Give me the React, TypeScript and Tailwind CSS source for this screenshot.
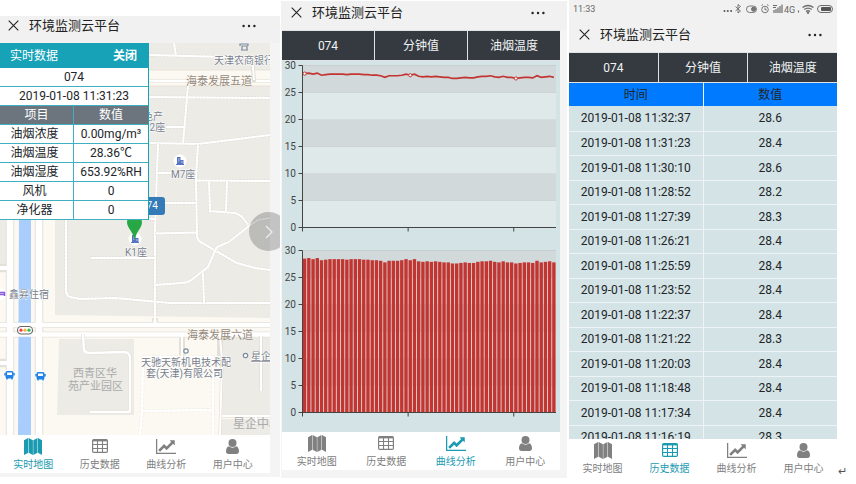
import type { ReactNode } from "react";

const FONT = "font-['Roboto','Noto_Sans_CJK_SC',sans-serif]";

function CloseIcon() {
  return (
    <svg viewBox="0 0 11 11" className="size-[11px]" fill="none" stroke="#222" strokeWidth="1.1">
      <path d="M.7.7l9.6 9.6M10.3.7L.7 10.3" />
    </svg>
  );
}

function DotsIcon() {
  return (
    <svg viewBox="0 0 14 4" className="h-1 w-3.5" fill="#222">
      <circle cx="1.6" cy="2" r="1.2" />
      <circle cx="7" cy="2" r="1.2" />
      <circle cx="12.4" cy="2" r="1.2" />
    </svg>
  );
}

function TitleBar({ className }: { className: string }) {
  return (
    <header className={`flex items-center bg-[#f1f1f1] ${className}`}>
      <button type="button" aria-label="close" className="mr-2.5">
        <CloseIcon />
      </button>
      <h1 className="text-[13px] leading-4 text-[#222]">环境监测云平台</h1>
      <button type="button" aria-label="more" className="ml-auto">
        <DotsIcon />
      </button>
    </header>
  );
}

function MapIcon() {
  return (
    <svg viewBox="0 0 18 17" className="h-[17px] w-[18px]" fill="currentColor">
      <path d="M0 2.200L4.200 0v14.800L0 17zM4.700 0L8.900 2.200V17l-4.200-2.200zM9.300 2.200L13.500 0v14.800L9.300 17zM14 0l4 2.200V17l-4-2.200z" />
    </svg>
  );
}

function TableIcon() {
  return (
    <svg viewBox="0 0 16 14" className="h-3.5 w-4" fill="none" stroke="currentColor">
      <rect x=".6" y=".6" width="14.800" height="12.800" rx="1.200" strokeWidth="1.200" />
      <path d="M1 1.500h14" strokeWidth="1.800" />
      <path d="M1 5.500h14M1 9.500h14M5.500 1v12M10.500 1v12" strokeWidth="1.100" />
    </svg>
  );
}

function LineIcon() {
  return (
    <svg viewBox="0 0 2048 1536" className="h-[15px] w-5" fill="currentColor">
      <path d="M2048 1408v128H0V0h128v1408zM1920 160v435q0 21-19.500 29.500t-35.500-7.500l-121-121-633 633q-10 10-23 10t-23-10l-233-233-416 416-192-192 585-585q10-10 23-10t23 10l233 233 464-464-121-121q-16-16-7.500-35.500t29.500-19.500h435q14 0 23 9t9 23z" />
    </svg>
  );
}

function UserIcon() {
  return (
    <svg viewBox="0 0 13 15" className="h-[15px] w-[13px]" fill="currentColor">
      <circle cx="6.500" cy="4" r="4" />
      <path d="M3 7.300C1 7.600 0 9.800 0 12.300 0 14 1 15 2.600 15h7.800c1.600 0 2.600-1 2.600-2.700 0-2.500-1-4.700-3-5-1 .9-2.100 1.400-3.500 1.400S4 8.200 3 7.300z" />
    </svg>
  );
}

const NAV: { label: string; icon: ReactNode }[] = [
  { label: "实时地图", icon: <MapIcon /> },
  { label: "历史数据", icon: <TableIcon /> },
  { label: "曲线分析", icon: <LineIcon /> },
  { label: "用户中心", icon: <UserIcon /> },
];

function TabBar({ active }: { active: number }) {
  return (
    <nav className="grid h-[38px] shrink-0 grid-cols-4 bg-white pt-[3px]">
      {NAV.map((item, i) => (
        <a
          key={item.label}
          href="#"
          className={`flex flex-col items-center gap-1 ${i === active ? "text-[#1b9bb1]" : "text-[#808080]"}`}
        >
          <span className="flex h-4 items-center">{item.icon}</span>
          <span className="text-[10px] leading-3.5 whitespace-nowrap">{item.label}</span>
        </a>
      ))}
    </nav>
  );
}

function FilterTabs() {
  return (
    <div className="grid h-[31px] shrink-0 grid-cols-3 gap-px border-y border-[#dfe3e5] bg-[#dfe3e5] text-[12px] text-[#f1f3f4]">
      {["074", "分钟值", "油烟温度"].map((t) => (
        <button key={t} type="button" className="bg-[#343a40]">
          {t}
        </button>
      ))}
    </div>
  );
}

const ROADS = [
  "M149 55L270 58M174 43l2 13M252 56l2 24",
  "M149 97l121 1M188 86l-5 58M166 127h18",
  "M149 143l49 1 72-9",
  "M158 143l-3 87v90",
  "M198 144l-2 34 1 59q1 4 5 6l35 20 18 5 15 2",
  "M197 180.500l73 .5M209 181l1 30 25 2q6 2 8 5l6 8-20 16-12 5-3 6-6 14-18 14q-4 2-8 2l-27 2",
  "M227 181l-1 30M249 226l9-6 12-2",
  "M155 203h41M155 233.500l42-1M157 173h18M149 219h6",
  "M66 220v70q0 6 4 7l10 2 35-1 55 5h100",
  "M203 273l1 30M91 258h64",
];

function Building({ x, y }: { x: number; y: number }) {
  return (
    <g>
      <circle cx={x} cy={y} r="6.500" fill="#fff" />
      <path d={`M${x - 3} ${y + 3}v-7h3.500v3h3v4z`} fill="#5874c4" />
      <path d={`M${x - 2} ${y - 2}h1.500M${x - 2} ${y}h1.500M${x + 1} ${y + 1}h2`} stroke="#fff" strokeWidth=".6" />
      <path d={`M${x - 4} ${y + 3.5}h8`} stroke="#5874c4" />
    </g>
  );
}

function Bus({ x, y }: { x: number; y: number }) {
  return (
    <g>
      <circle cx={x} cy={y} r="6" fill="#fff" />
      <rect x={x - 4} y={y - 4} width="8" height="7.500" rx="1.500" fill="#1e82e6" />
      <rect x={x - 2.5} y={y - 2.5} width="5" height="2.500" fill="#fff" />
      <path
        d={`M${x - 4.5} ${y - 2}v2.500M${x + 4.5} ${y - 2}v2.500M${x - 2.5} ${y + 2}v2.500M${x + 2.5} ${y + 2}v2.500`}
        stroke="#1e82e6"
        strokeWidth="1.500"
      />
    </g>
  );
}

function MapCanvas() {
  return (
    <svg viewBox="0 43 270 392" preserveAspectRatio="xMinYMid slice" className="block h-[392px] w-full">
      <rect y="43" width="270" height="392" fill="#fcf9f2" />
      <g fill="#ecebe6">
        <path d="M50 43h220v27H50zM55 86h215v232L55 315z" />
        <path d="M0 220h6v46H0zM59 339h75v76H57zM222 337h48v77h-48z" />
        <path d="M222 419h48v16h-50z" />
      </g>
      <path d="M50 70h220M50 86h220" stroke="#e7e2d8" />
      <path d="M50 81h220" stroke="#e3ded2" strokeWidth="3" />
      <path d="M50 81h220" stroke="#fff" strokeWidth="2" />
      <path d="M252 56l2 26" stroke="#e0ddd4" strokeWidth="4" />

      <g stroke="#e4e1d9" strokeWidth="8.500" fill="none">
        <path d="M10 215v220M39 215v220M0 268h8M0 363h8" />
        <path d="M0 325h270M0 334.500h270M155 318v8M182 336v20M220 336v20" strokeWidth="6" />
      </g>
      <path d="M19 215h12v220H18z" fill="#a9cdfd" />
      <g stroke="#fff" strokeWidth="6.500" fill="none">
        <path d="M10 215v220M39 215v220" />
        <path d="M0 268h8M0 363h8" strokeWidth="4" />
        <path d="M0 325h270M0 334.500h270" strokeWidth="4.500" />
        <path d="M155 318v8" strokeWidth="3" />
        <path d="M182 336v20" strokeWidth="2" />
      </g>
      <path d="M220 336l2 24-2 75M222 416h48M261 336v55M256 416v8" stroke="#d9d7d0" strokeWidth="3" fill="none" />
      <path d="M220 336l2 24-2 75M222 416h48M261 336v55M256 416v8" stroke="#fff" strokeWidth="2" fill="none" />

      <g fill="none">
        {ROADS.map((d) => (
          <g key={d}>
            <path d={d} stroke="#dad8d1" strokeWidth="3" strokeDasharray="2 1.500" />
            <path d={d} stroke="#fff" strokeWidth="2" />
          </g>
        ))}
        <path d="M83 334l1 16q1 3 5 3l36-1q5 1 5 6v53q0 1-2 1H90" stroke="#dedcd5" strokeWidth="3.500" />
        <path d="M83 334l1 16q1 3 5 3l36-1q5 1 5 6v53q0 1-2 1H90" stroke="#fff" strokeWidth="2.500" />
        <path d="M143 357h70v78M143 357l-1 54-2 24M143 411l70-1" stroke="#ebe8e1" strokeWidth="3.500" strokeDasharray="3 1.500" />
        <path d="M143 357h70v78M143 357l-1 54-2 24M143 411l70-1" stroke="#fff" strokeWidth="2.500" />
      </g>

      <g fill="none" stroke="#7d8ba0" strokeWidth="1.200">
        <path d="M240 46v-2h8v2M242 46v4h5v-4zM241 50h7" />
        <circle cx="186" cy="351" r="2.200" fill="#fff" />
        <circle cx="245.500" cy="355.500" r="2.200" fill="#fff" />
      </g>
      <Building x={180} y={161} />
      <Building x={135} y={239} />
      <Bus x={9.5} y={375} />
      <Bus x={40.5} y={376} />
      <rect x="17.500" y="326.500" width="15" height="7.500" rx="3.700" fill="#fff" stroke="#666" strokeWidth="1.100" />
      <circle cx="21" cy="330.200" r="1.600" fill="#f0425a" />
      <circle cx="25" cy="330.200" r="1.600" fill="#f5b52e" />
      <circle cx="29" cy="330.200" r="1.600" fill="#35b860" />
      <circle cx="0" cy="294" r="6" fill="#fff" />
      <path d="M0 292.500h4.500v3.500M0 294.500h4.500" stroke="#8a5bd6" strokeWidth="1.500" fill="none" />

      <g fontSize="10" fill="#78808c" stroke="#fff" strokeWidth="1" paintOrder="stroke">
        <text x="214" y="64">天津农商银行</text>
        <text x="171" y="178">M7座</text>
        <text x="125" y="256">K1座</text>
        <text x="9" y="298">鑫昇住宿</text>
        <text x="141" y="366">天驰天新机电技术配</text>
        <text x="146" y="377">套(天津)有限公司</text>
        <text x="251" y="360" textDecoration="underline">星企</text>
        <text x="143" y="120">色产</text>
        <text x="144" y="131">12座</text>
      </g>
      <g fontSize="11" fill="#968a7d">
        <text x="186" y="85">海泰发展五道</text>
        <text x="187" y="339">海泰发展六道</text>
      </g>
      <g fontSize="11" fill="#aaa">
        <text x="73" y="377">西青区华</text>
        <text x="68" y="390">苑产业园区</text>
        <text x="233" y="428" fontSize="12">星企中心</text>
      </g>

      <rect x="122" y="197" width="43" height="18" rx="3" fill="#337ab7" />
      <text x="141" y="209" fontSize="10" fill="#fff">074</text>
      <path d="M127 222a7.500 7.500 0 0 1 15 0c0 6-5.500 9-7 17h-1c-1-8-7-11-7-17z" fill="#28a745" />
    </svg>
  );
}

const READINGS = [
  ["油烟浓度", "0.00mg/m³"],
  ["油烟温度", "28.36℃"],
  ["油烟湿度", "653.92%RH"],
  ["风机", "0"],
  ["净化器", "0"],
];

function LivePanel() {
  return (
    <section className="absolute top-0 left-0 w-[149px] bg-white text-[12px] leading-[18px] text-[#212529]">
      <div className="flex h-[25px] items-center justify-between bg-[#17a2b8] pr-3 pl-2.5 text-white">
        <h2>实时数据</h2>
        <button type="button" className="font-bold">
          关闭
        </button>
      </div>
      <table className="w-full table-fixed border-separate border-spacing-0 border-r border-[#17a2b8] text-center [&_td]:border-b [&_td]:border-[#3fafc1] [&_td]:p-0 [&_th]:border-b [&_th]:border-[#3fafc1] [&_th]:p-0">
        <colgroup>
          <col className="w-[74px]" />
          <col />
        </colgroup>
        <tbody>
          <tr>
            <td colSpan={2}>074</td>
          </tr>
          <tr>
            <td colSpan={2}>2019-01-08 11:31:23</td>
          </tr>
          <tr className="bg-[#6c757d] text-white">
            <th className="border-r font-normal">项目</th>
            <th className="font-normal">数值</th>
          </tr>
          {READINGS.map(([k, v]) => (
            <tr key={k}>
              <td className="border-r pr-1!">{k}</td>
              <td>{v}</td>
            </tr>
          ))}
        </tbody>
      </table>
    </section>
  );
}

function MapScreen() {
  return (
    <div className="min-w-0 pt-4">
      <div className="relative overflow-hidden bg-[#f4f4f4] pb-1">
        <TitleBar className="h-[27px] pr-6 pb-2 pl-2" />
        <div className="pr-2.5">
          <div className="relative">
            <MapCanvas />
            <LivePanel />
          </div>
          <div className="bg-white pr-1">
            <TabBar active={0} />
          </div>
        </div>
        <button
          type="button"
          aria-label="next"
          className="absolute top-[196px] -right-2 flex size-[39px] items-center justify-center rounded-full bg-black/20"
        >
          <svg viewBox="0 0 8 14" className="h-3.5 w-2" fill="none" stroke="#eee" strokeWidth="1.200">
            <path d="M1 1l6 6-6 6" />
          </svg>
        </button>
      </div>
    </div>
  );
}

const VALUES = [
  28.5, 28.6, 28.4, 28.6, 28.2, 28.3, 28.4, 28.4, 28.4, 28.4, 28.3, 28.4, 28.4, 28.4, 28.3, 28.3, 28.2, 28.2, 28.1,
  27.8, 28.1, 28.1, 28.1, 28.2, 28.4, 28.2, 28.4, 28.0, 27.9, 28.0, 27.9, 28.0, 27.9, 27.8, 27.8, 27.6, 27.6, 27.7,
  27.8, 27.7, 27.7, 27.9, 28.0, 28.0, 28.1, 27.9, 27.8, 28.0, 27.8, 27.8, 27.6, 27.7, 27.8, 27.8, 27.7, 28.1, 27.8,
  27.9, 28.0, 27.8,
];

const LEFT = 20.5;
const WIDTH = 253.5;
const STEP = WIDTH / VALUES.length;
const centre = (i: number) => LEFT + STEP * (i + 0.5);
const rise = (v: number) => v * 5.4;

function Plot({ base, children }: { base: number; children: ReactNode }) {
  return (
    <g>
      {[0, 1, 2, 3, 4, 5].map((i) => (
        <g key={i}>
          <rect
            x={LEFT}
            y={base - (i + 1) * 27}
            width={WIDTH}
            height="27"
            fill={i % 2 ? "#d1d9db" : "#e0e9ea"}
          />
          <path d={`M${LEFT} ${base - (i + 1) * 27}h${WIDTH}`} stroke="#c8cecf" />
        </g>
      ))}
      {children}
      <path
        d={`M${LEFT} ${base - 162}V${base + 4}M${LEFT} ${base}h${WIDTH}M${LEFT + STEP * 25} ${base}v4M${LEFT + STEP * 50} ${base}v4`}
        stroke="#444"
        fill="none"
      />
      {[0, 5, 10, 15, 20, 25, 30].map((v) => (
        <g key={v}>
          <path d={`M${LEFT - 4} ${base - rise(v)}h4`} stroke="#444" />
          <text x="14" y={base - rise(v) + 3.5} textAnchor="end" fontSize="10" fill="#444">
            {v}
          </text>
        </g>
      ))}
    </g>
  );
}

function Charts() {
  return (
    <svg viewBox="0 0 278 371" preserveAspectRatio="none" className="block h-[371px] w-full bg-[#d4e3e5]">
      <Plot base={166.5}>
        <path
          d={VALUES.map((v, i) => `${i ? "L" : "M"}${centre(i)} ${166.5 - rise(v)}`).join("")}
          fill="none"
          stroke="#c23531"
          strokeWidth="1.700"
        />
        {[0, 25, 50].map((i) => (
          <circle key={i} cx={centre(i)} cy={166.5 - rise(VALUES[i])} r="1.600" fill="#fff" stroke="#c23531" />
        ))}
      </Plot>
      <Plot base={351.5}>
        {VALUES.map((v, i) => (
          <rect key={i} x={centre(i) - 1.7} y={351.5 - rise(v)} width="3.400" height={rise(v)} fill="#c23531" />
        ))}
      </Plot>
    </svg>
  );
}

function ChartScreen() {
  return (
    <div className="min-w-0 pt-px">
      <div className="bg-[#f4f4f4] pb-2">
        <TitleBar className="h-[29px] pr-[22px] pb-1.5 pl-2.5" />
        <div className="pr-[7px] pl-px">
          <FilterTabs />
          <Charts />
          <TabBar active={2} />
        </div>
      </div>
    </div>
  );
}

const ROWS = [
  ["2019-01-08 11:32:37", "28.6"],
  ["2019-01-08 11:31:23", "28.4"],
  ["2019-01-08 11:30:10", "28.6"],
  ["2019-01-08 11:28:52", "28.2"],
  ["2019-01-08 11:27:39", "28.3"],
  ["2019-01-08 11:26:21", "28.4"],
  ["2019-01-08 11:25:59", "28.4"],
  ["2019-01-08 11:23:52", "28.4"],
  ["2019-01-08 11:22:37", "28.4"],
  ["2019-01-08 11:21:22", "28.3"],
  ["2019-01-08 11:20:03", "28.4"],
  ["2019-01-08 11:18:48", "28.4"],
  ["2019-01-08 11:17:34", "28.4"],
  ["2019-01-08 11:16:19", "28.3"],
];

function StatusBar() {
  return (
    <div className="flex h-[17px] shrink-0 items-center bg-[#f1f1f1] px-1 text-[9px] leading-3 text-[#666]">
      <span className="mr-auto">11:33</span>
      <svg viewBox="0 0 110 12" className="h-3 w-[110px]" fill="none" stroke="#6b6b6b">
        <g fill="#555" stroke="none">
          <circle cx="1.500" cy="8" r="1" />
          <circle cx="4.800" cy="8" r="1" />
          <circle cx="8.100" cy="8" r="1" />
        </g>
        <path d="M12.500 3.500l5 4.500-2.500 2V1.500l2.500 2-5 4.500" strokeWidth=".9" />
        <rect x="23.500" y="3" width="10" height="6.500" rx="3.200" strokeWidth=".9" />
        <circle cx="30.500" cy="6.200" r="2" fill="#777" />
        <circle cx="42" cy="6.500" r="3.300" strokeWidth=".9" />
        <path d="M42 4.500v2.300h1.800M38.500 2.500l1.500-1M45.500 2.500l-1.500-1" strokeWidth=".9" />
        <path d="M51 10V7M53 10V6M55 10V4.500M57 10V3M59 10V1.500M50 2.500h4M50 4.500h3" strokeWidth="1.200" />
        <text x="61" y="9.500" fontSize="9" fill="#666" stroke="none">
          4G
        </text>
        <path d="M75.500 9.500v-2" strokeWidth="1.200" />
        <path d="M79.500 4.500q5.500-4 11 0M81.200 6.500q3.800-2.800 7.600 0M83 8.500q2-1.500 4 0" strokeWidth="1.300" />
        <circle cx="85" cy="9.800" r=".8" fill="#666" />
        <rect x="94.500" y="2.500" width="15" height="7" rx="3.500" />
        <rect x="98" y="4" width="10" height="4" rx="1" fill="#555" stroke="none" />
      </svg>
    </div>
  );
}

function HistoryScreen() {
  return (
    <div className="flex h-[477px] min-w-0 flex-col pl-px">
      <StatusBar />
      <TitleBar className="h-[35px] shrink-0 pr-[15px] pl-2.5" />
      <FilterTabs />
      <div className="min-h-0 flex-1 overflow-hidden">
        <table className="w-full table-fixed border-collapse bg-[#d4e3e5] text-center text-[12px] leading-4 text-[#212529] [&_td]:p-0 [&_th]:p-0">
          <thead>
            <tr className="h-[23px] bg-[#007bff]">
              <th className="border-r border-[#eef4f5] font-normal">时间</th>
              <th className="font-normal">数值</th>
            </tr>
          </thead>
          <tbody>
            {ROWS.map(([time, value]) => (
              <tr key={time} className="border-b border-[#eef4f5] odd:h-[25px] even:h-6">
                <td className="border-r border-[#eef4f5]">{time}</td>
                <td>{value}</td>
              </tr>
            ))}
          </tbody>
        </table>
      </div>
      <TabBar active={1} />
    </div>
  );
}

export default function App() {
  return (
    <main className={`grid grid-cols-[280fr_286fr_269fr_18fr] gap-px bg-white ${FONT}`}>
      <MapScreen />
      <ChartScreen />
      <HistoryScreen />
      <span className="self-end text-[11px] leading-3 text-[#555]">↵</span>
    </main>
  );
}
